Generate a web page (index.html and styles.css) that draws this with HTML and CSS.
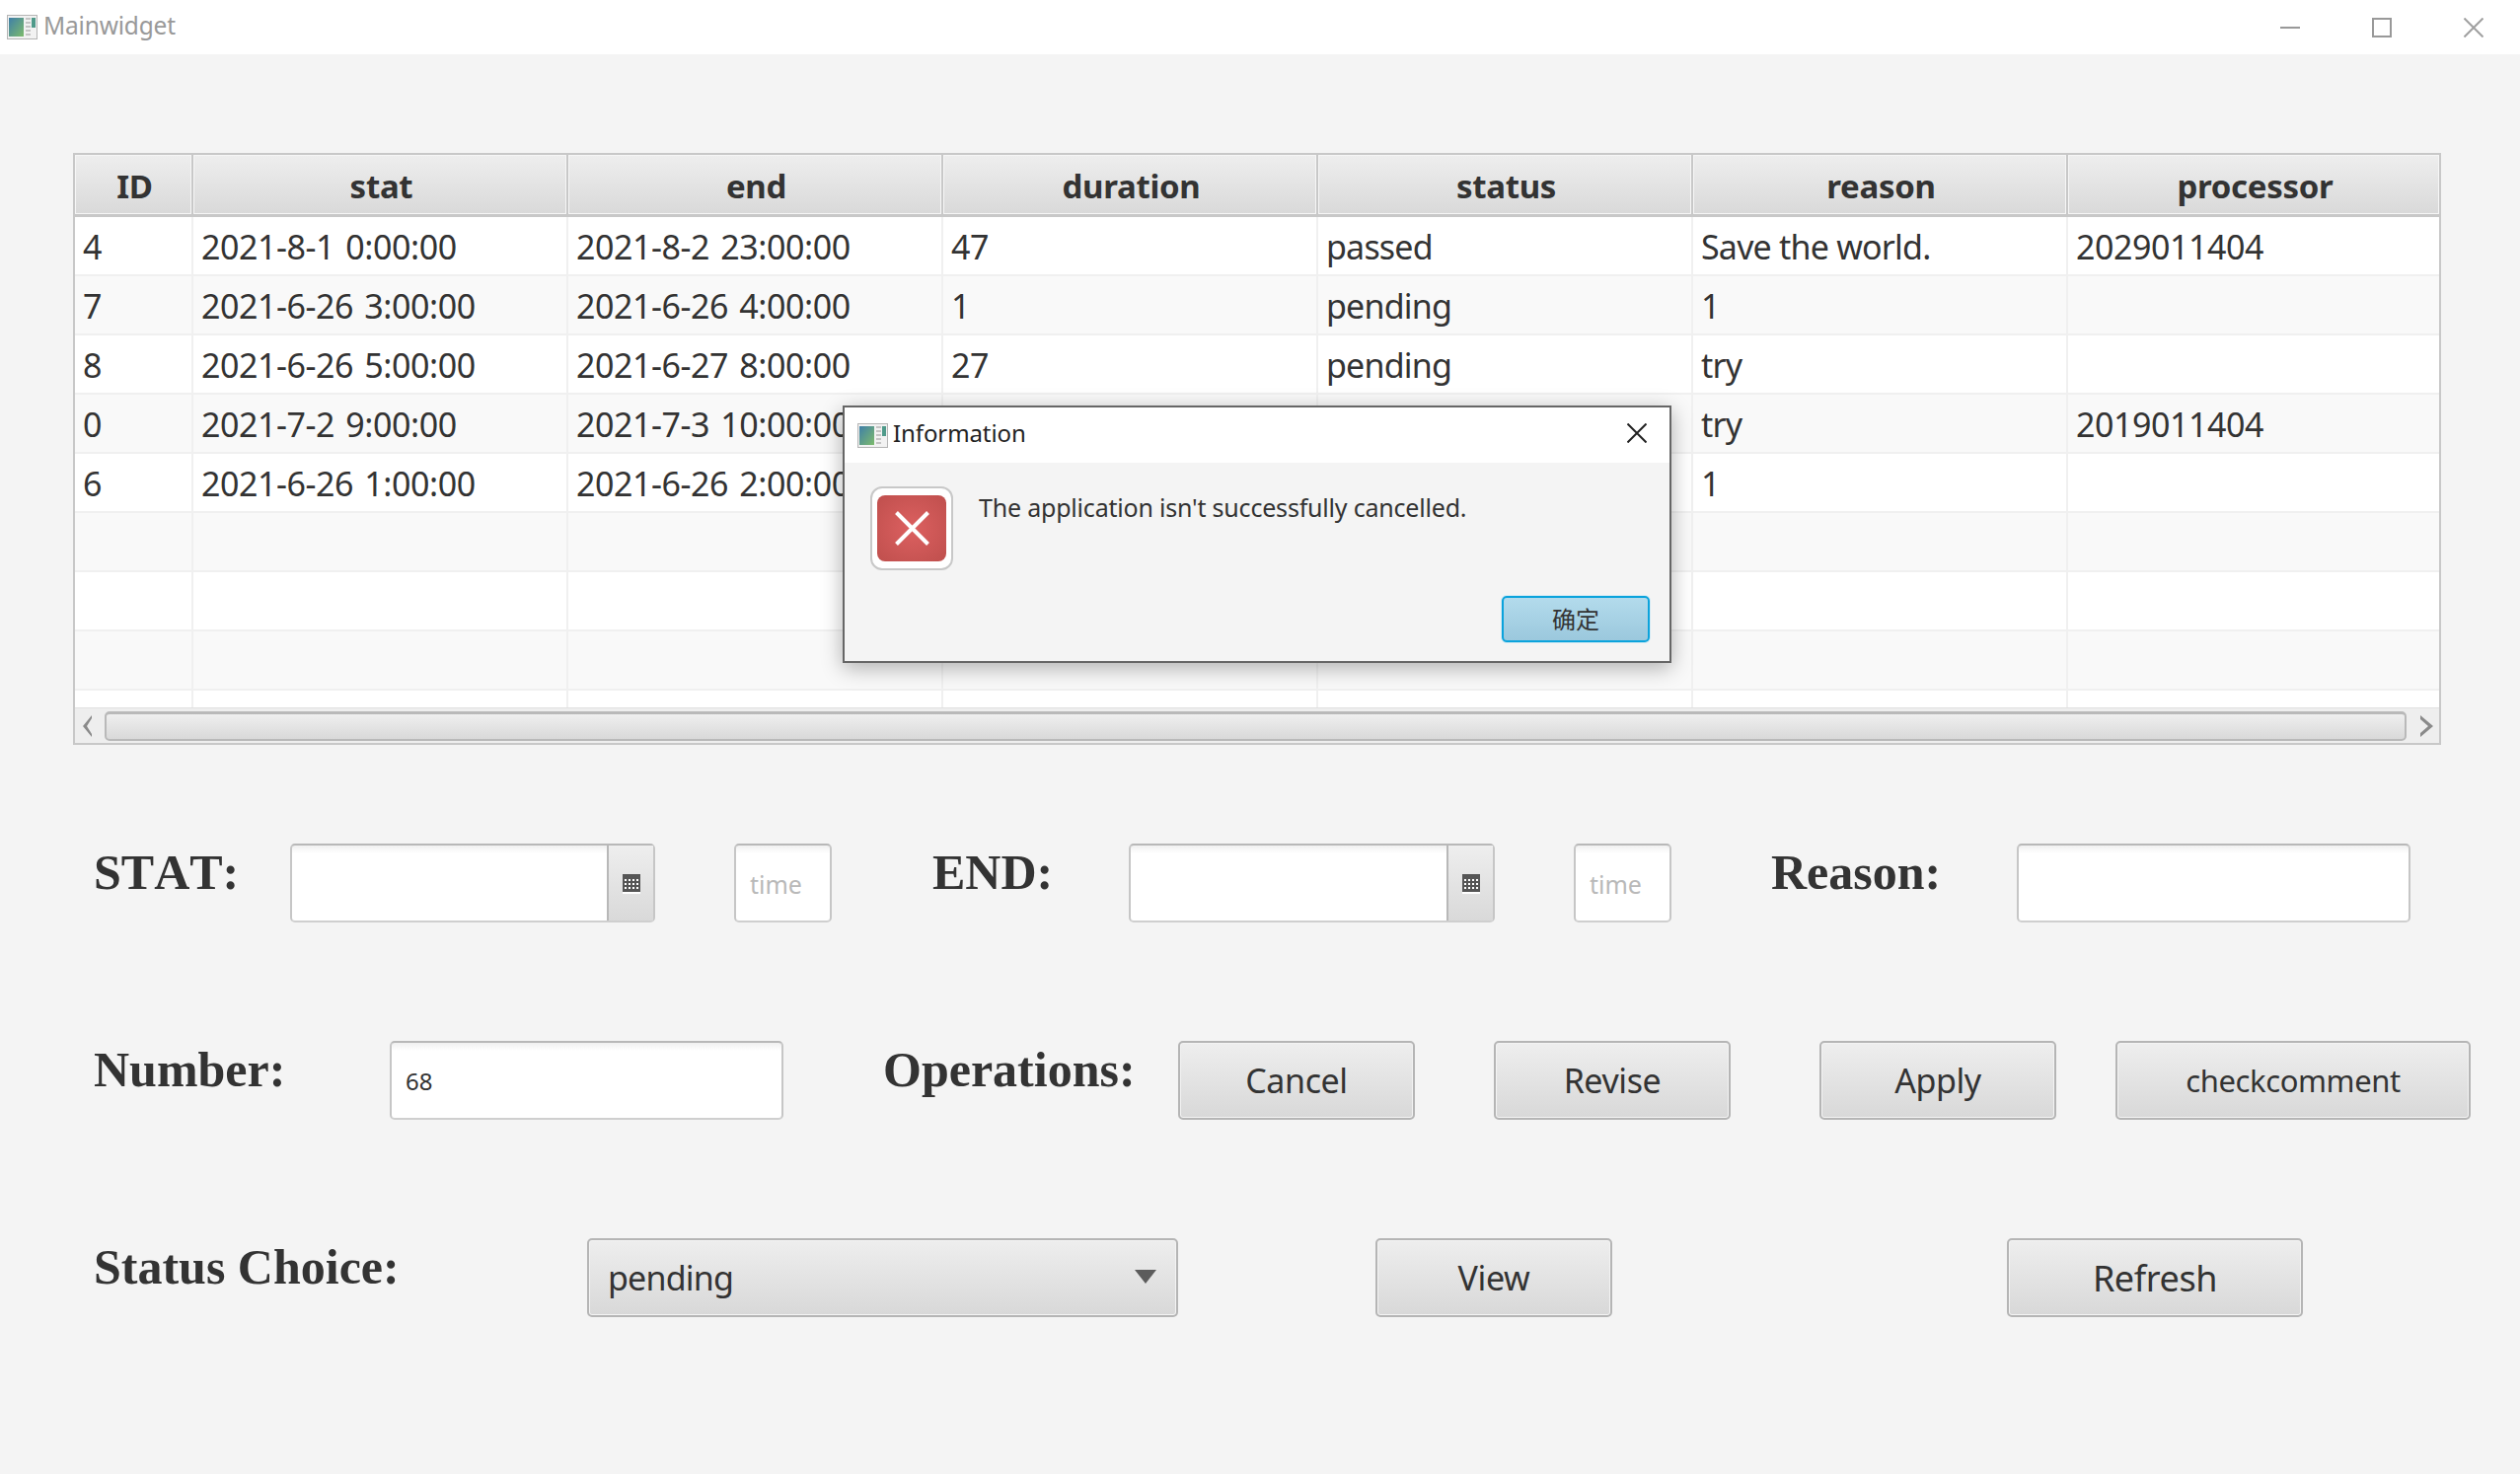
FILE: index.html
```html
<!DOCTYPE html>
<html>
<head>
	<meta charset="UTF-8">
	<title>Mainwidget</title>
	<link rel="stylesheet" href="styles.css">
</head>
<body>
<div id="window">
	<div class="titlebar">
		<svg class="appicon" viewBox="0 0 31 25"><defs><linearGradient id="ag" x1="0" y1="0" x2="1" y2="1"><stop offset="0" stop-color="#3f7fa8"/><stop offset="1" stop-color="#7dbb6c"/></linearGradient></defs><rect x="0.5" y="0.5" width="30" height="24" fill="#f2f2f2" stroke="#b5b5b5"/><rect x="2" y="3" width="15" height="19" fill="url(#ag)"/><rect x="19" y="3" width="5" height="2" fill="#c4c4c4"/><rect x="19" y="7" width="5" height="2" fill="#c4c4c4"/><rect x="19" y="11" width="5" height="2" fill="#c4c4c4"/><rect x="19" y="15" width="5" height="2" fill="#c4c4c4"/><rect x="19" y="19" width="5" height="2" fill="#c4c4c4"/><rect x="25" y="3" width="4" height="10" fill="#4f9a8a"/></svg>
		<span class="wintitle">Mainwidget</span>
		<div class="winbtns">
			<svg viewBox="0 0 20 20"><path d="M0 10H20" stroke="#999" stroke-width="2" fill="none"/></svg>
			<svg viewBox="0 0 20 20"><rect x="1" y="1" width="18" height="18" stroke="#999" stroke-width="2" fill="none"/></svg>
			<svg viewBox="0 0 20 20"><path d="M0.5 0.5L19.5 19.5M19.5 0.5L0.5 19.5" stroke="#a0a0a0" stroke-width="2" fill="none"/></svg>
		</div>
	</div>
	<div class="content">
		<div class="tablebox">
			<div class="viewport">
				<table>
					<colgroup><col class="c-id"><col class="c-n"><col class="c-n"><col class="c-n"><col class="c-n"><col class="c-n"><col class="c-l"></colgroup>
					<thead><tr><th>ID</th><th>stat</th><th>end</th><th>duration</th><th>status</th><th>reason</th><th>processor</th></tr></thead>
					<tbody>
						<tr><td>4</td><td>2021-8-1 0:00:00</td><td>2021-8-2 23:00:00</td><td>47</td><td>passed</td><td>Save the world.</td><td>2029011404</td></tr>
						<tr><td>7</td><td>2021-6-26 3:00:00</td><td>2021-6-26 4:00:00</td><td>1</td><td>pending</td><td>1</td><td></td></tr>
						<tr><td>8</td><td>2021-6-26 5:00:00</td><td>2021-6-27 8:00:00</td><td>27</td><td>pending</td><td>try</td><td></td></tr>
						<tr><td>0</td><td>2021-7-2 9:00:00</td><td>2021-7-3 10:00:00</td><td></td><td></td><td>try</td><td>2019011404</td></tr>
						<tr><td>6</td><td>2021-6-26 1:00:00</td><td>2021-6-26 2:00:00</td><td></td><td></td><td>1</td><td></td></tr>
						<tr><td></td><td></td><td></td><td></td><td></td><td></td><td></td></tr>
						<tr><td></td><td></td><td></td><td></td><td></td><td></td><td></td></tr>
						<tr><td></td><td></td><td></td><td></td><td></td><td></td><td></td></tr>
						<tr><td></td><td></td><td></td><td></td><td></td><td></td><td></td></tr>
					</tbody>
				</table>
			</div>
			<div class="hscroll">
				<svg class="chev chev-l" viewBox="0 0 13 22"><path d="M13 0L4 11L13 22L13 19L8 11L13 3Z" fill="#8a8a8a"/></svg>
				<div class="thumb"></div>
				<svg class="chev chev-r" viewBox="0 0 13 22"><path d="M0 0L13 11L0 22L0 18L8 11L0 4Z" fill="#8a8a8a"/></svg>
			</div>
		</div>

		<div class="formrow first">
			<div class="lbl w199">STAT:</div>
			<div class="field date w370"><div class="dateinput"></div><div class="calbtn"><svg viewBox="0 0 18 20"><rect width="18" height="18" fill="#555"/><rect y="18" width="18" height="2" fill="#fff"/><g fill="#fff"><rect x="2" y="5" width="2" height="2"/><rect x="6" y="5" width="2" height="2"/><rect x="10" y="5" width="2" height="2"/><rect x="14" y="5" width="2" height="2"/><rect x="2" y="9" width="2" height="2"/><rect x="6" y="9" width="2" height="2"/><rect x="10" y="9" width="2" height="2"/><rect x="14" y="9" width="2" height="2"/><rect x="2" y="13" width="2" height="2"/><rect x="6" y="13" width="2" height="2"/><rect x="10" y="13" width="2" height="2"/><rect x="14" y="13" width="2" height="2"/></g></svg></div></div>
			<div class="field timefield w99 ml80">time</div>
			<div class="lbl w199 ml102">END:</div>
			<div class="field date w371"><div class="dateinput"></div><div class="calbtn"><svg viewBox="0 0 18 20"><rect width="18" height="18" fill="#555"/><rect y="18" width="18" height="2" fill="#fff"/><g fill="#fff"><rect x="2" y="5" width="2" height="2"/><rect x="6" y="5" width="2" height="2"/><rect x="10" y="5" width="2" height="2"/><rect x="14" y="5" width="2" height="2"/><rect x="2" y="9" width="2" height="2"/><rect x="6" y="9" width="2" height="2"/><rect x="10" y="9" width="2" height="2"/><rect x="14" y="9" width="2" height="2"/><rect x="2" y="13" width="2" height="2"/><rect x="6" y="13" width="2" height="2"/><rect x="10" y="13" width="2" height="2"/><rect x="14" y="13" width="2" height="2"/></g></svg></div></div>
			<div class="field timefield w99 ml80">time</div>
			<div class="lbl w249 ml101">Reason:</div>
			<div class="field w399"></div>
		</div>

		<div class="formrow">
			<div class="lbl w300">Number:</div>
			<div class="field numfield w399">68</div>
			<div class="lbl w299 ml101">Operations:</div>
			<div class="btn w240">Cancel</div>
			<div class="btn w240 ml80">Revise</div>
			<div class="btn w240 ml90">Apply</div>
			<div class="btn small w360 ml60">checkcomment</div>
		</div>

		<div class="formrow">
			<div class="lbl w500">Status Choice:</div>
			<div class="btn combo w599"><span>pending</span><svg class="arrow" viewBox="0 0 22 16"><path d="M0 0H22L11 14Z" fill="#5c5c5c"/></svg></div>
			<div class="btn w240 ml200">View</div>
			<div class="btn large w300 ml400">Refresh</div>
		</div>
	</div>

	<div class="dialog">
		<div class="dlgtitle">
			<svg class="dlgicon" viewBox="0 0 31 25"><defs><linearGradient id="bg" x1="0" y1="0" x2="1" y2="1"><stop offset="0" stop-color="#3f7fa8"/><stop offset="1" stop-color="#7dbb6c"/></linearGradient></defs><rect x="0.5" y="0.5" width="30" height="24" fill="#f2f2f2" stroke="#b5b5b5"/><rect x="2" y="3" width="15" height="19" fill="url(#bg)"/><rect x="19" y="3" width="5" height="2" fill="#c4c4c4"/><rect x="19" y="7" width="5" height="2" fill="#c4c4c4"/><rect x="19" y="11" width="5" height="2" fill="#c4c4c4"/><rect x="19" y="15" width="5" height="2" fill="#c4c4c4"/><rect x="19" y="19" width="5" height="2" fill="#c4c4c4"/><rect x="25" y="3" width="4" height="10" fill="#4f9a8a"/></svg>
			<span>Information</span>
			<svg class="dlgclose" viewBox="0 0 20 20"><path d="M0.5 0.5L19.5 19.5M19.5 0.5L0.5 19.5" stroke="#222" stroke-width="2" fill="none"/></svg>
		</div>
		<div class="dlgbody">
			<div class="errbox"><div class="errred"><svg viewBox="0 0 35 35"><path d="M1.5 1.5L33.5 33.5M33.5 1.5L1.5 33.5" stroke="#fff" stroke-width="4" fill="none"/></svg></div></div>
			<div class="dlgmsg">The application isn't successfully cancelled.</div>
		</div>
		<div class="dlgfoot"><div class="okbtn">确定</div></div>
	</div>
</div>
</body>
</html>
```

FILE: styles.css
```css
html,body{margin:0;padding:0;}
body{font-family:"Noto Sans","Noto Sans CJK SC",sans-serif;color:#333;background:#f4f4f4;}
#window{position:relative;width:2554px;height:1494px;overflow:hidden;background:#f4f4f4;}

.titlebar{display:flex;align-items:center;height:55px;background:#fff;padding-left:7px;}
.appicon{width:31px;height:25px;}
.wintitle{margin:0 0 4px 6px;font-size:24.5px;letter-spacing:-.2px;color:#999;}
.winbtns{display:flex;margin-left:auto;margin-right:37px;gap:73px;}
.winbtns svg{width:20px;height:20px;}

.content{padding:100px 0 0 74px;}
.tablebox{display:flex;flex-direction:column;box-sizing:border-box;width:2400px;height:600px;border:2px solid #c8c8c8;background:#fff;}
.viewport{height:560px;overflow:hidden;}
table{width:2396px;table-layout:fixed;border-collapse:separate;border-spacing:0;}
.c-id{width:120px;}
.c-n{width:380px;}
.c-l{width:376px;}
th{box-sizing:border-box;height:63px;padding:3px 0 0 3px;border-right:2px solid #c8c8c8;border-bottom:3px solid #c8c8c8;background:linear-gradient(#eeeeee,#d9d9d9);box-shadow:inset 0 0 0 1px #f6f6f6;font-size:33px;font-weight:700;letter-spacing:-.3px;color:#333;}
td{box-sizing:border-box;height:60px;padding:2px 0 0 8px;border-right:2px solid #f0f0f0;border-bottom:2px solid #f0f0f0;font-size:34px;letter-spacing:-.45px;white-space:nowrap;overflow:hidden;color:#333;}
td:nth-child(2),td:nth-child(3){word-spacing:3px;}
td:nth-child(5),td:nth-child(6){letter-spacing:-.8px;}
th:last-child,td:last-child{border-right:0;}
tbody tr:nth-child(even){background:#f9f9f9;}

.hscroll{display:flex;align-items:center;flex:1;background:#eeeeee;border-top:1px solid #e0e0e0;}
.chev{width:13px;height:22px;}
.chev-l{margin-left:4px;}
.chev-r{margin:0 6px 0 14px;}
.thumb{flex:1;box-sizing:border-box;height:30px;margin-left:13px;border:2px solid #b9b9b9;border-top-width:3px;border-radius:5px;background:linear-gradient(#efefef,#d9d9d9);}

.formrow{display:flex;align-items:flex-start;height:80px;margin:120px 0 0 21px;}
.formrow.first{margin-top:100px;}
.lbl{flex:none;margin-top:-1px;font-family:"Liberation Serif",serif;font-weight:700;font-size:50px;line-height:60px;font-kerning:none;color:#333;}

.field,.btn{flex:none;box-sizing:border-box;height:80px;border-radius:5px;}
.field{border:2px solid #c6c6c6;border-top-color:#b8b8b8;border-bottom-color:#cfcfcf;background:linear-gradient(#f0f0f0,#fff 8px);}
.date{display:flex;}
.dateinput{flex:1;}
.calbtn{display:flex;justify-content:center;align-items:center;box-sizing:border-box;width:47px;border-left:2px solid #b8b8b8;background:linear-gradient(#eeeeee,#d9d9d9);}
.calbtn svg{width:18px;height:20px;margin-top:2px;}
.timefield,.numfield{display:flex;align-items:center;padding:2px 0 0 14px;}
.timefield{font-size:25px;color:#b9b9b9;}
.numfield{padding-top:0;font-size:24px;color:#333;}

.btn{display:flex;justify-content:center;align-items:center;border:2px solid #b5b5b5;background:linear-gradient(#eeeeee,#d8d8d8);box-shadow:inset 0 0 0 1px #f3f3f3;font-size:34px;letter-spacing:-.4px;color:#333;}
.btn.small{font-size:31px;}
.btn.large{font-size:36px;}
.combo{justify-content:space-between;padding:0 20px 0 19px;letter-spacing:-.8px;}
.arrow{width:22px;height:16px;}

.w99{width:99px;}
.w199{width:199px;}
.w240{width:240px;}
.w249{width:249px;}
.w299{width:299px;}
.w300{width:300px;}
.w360{width:360px;}
.w370{width:370px;}
.w371{width:371px;}
.w399{width:399px;}
.w500{width:500px;}
.w599{width:599px;}
.ml60{margin-left:60px;}
.ml80{margin-left:80px;}
.ml90{margin-left:90px;}
.ml101{margin-left:101px;}
.ml102{margin-left:102px;}
.ml200{margin-left:200px;}
.ml400{margin-left:400px;}

.dialog{position:absolute;left:854px;top:411px;box-sizing:border-box;width:840px;height:261px;border:2px solid #666;background:#f4f4f4;box-shadow:0 5px 20px rgba(0,0,0,.3);}
.dlgtitle{display:flex;align-items:center;height:56px;background:#fff;padding-left:13px;font-size:24px;letter-spacing:-.1px;color:#222;}
.dlgtitle span{margin-bottom:6px;}
.dlgicon{width:31px;height:25px;margin-right:5px;}
.dlgclose{width:20px;height:20px;margin:-4px 23px 0 auto;}
.dlgbody{display:flex;height:135px;padding:24px 0 0 26px;box-sizing:border-box;}
.errbox{box-sizing:border-box;width:84px;height:85px;padding:7px 5px;border:2px solid #c8c8c8;border-radius:12px;background:#fff;}
.errred{display:flex;justify-content:center;align-items:center;height:100%;border-radius:8px;background:radial-gradient(#dc6060,#bf4f4d);}
.errred svg{width:35px;height:35px;}
.dlgmsg{margin:5px 0 0 26px;font-size:25px;line-height:32px;letter-spacing:-.2px;color:#333;}
.dlgfoot{display:flex;justify-content:flex-end;padding-right:20px;}
.okbtn{display:flex;justify-content:center;align-items:center;box-sizing:border-box;width:150px;height:47px;padding-bottom:3px;border:2px solid #0ba3dc;border-radius:5px;background:linear-gradient(#b3dbec,#9bc8dd);box-shadow:0 0 0 1px #d5ebf4;font-size:24px;color:#333;}
```
